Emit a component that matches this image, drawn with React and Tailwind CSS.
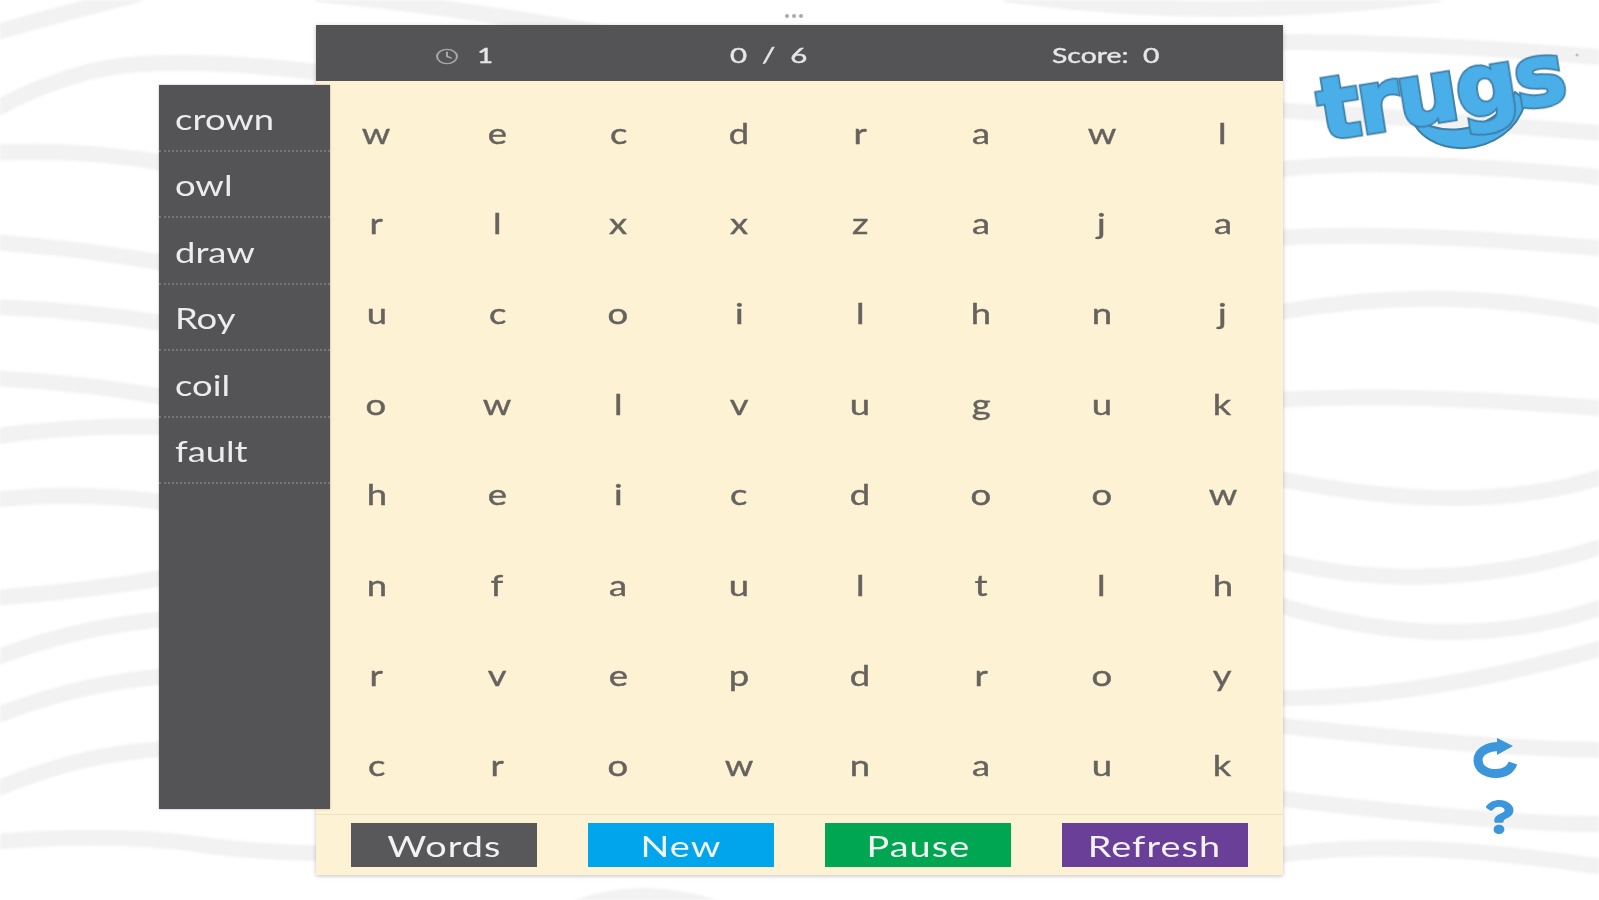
import React from 'react';
import { Clock } from 'lucide-react';
import { FaQuestion } from 'react-icons/fa';

const words = ['crown', 'owl', 'draw', 'Roy', 'coil', 'fault'];

const grid = [
  'wecdrawl',
  'rlxxzaja',
  'ucoilhnj',
  'owlvuguk',
  'heicdoow',
  'nfaultlh',
  'rvepdroy',
  'crownauk',
];

const buttons = [
  { label: 'Words', color: 'bg-[#58575a]' },
  { label: 'New', color: 'bg-[#00a5ec]' },
  { label: 'Pause', color: 'bg-[#00a651]' },
  { label: 'Refresh', color: 'bg-[#693f98]' },
];

// the wavy lines behind the game
const waves = [
  'M-10 34 Q60 14 140 -6',
  'M-10 112 Q70 68 140 64 Q230 60 330 74',
  'M-10 153 Q80 148 170 164',
  'M-10 242 Q80 248 170 264',
  'M-10 307 Q80 310 170 324',
  'M-10 378 Q80 382 170 398',
  'M-10 437 Q80 424 170 427',
  'M-10 500 Q80 490 170 503',
  'M-10 598 Q80 592 170 577',
  'M-10 660 Q80 625 170 619',
  'M-10 718 Q80 682 170 676',
  'M-10 792 Q80 752 170 749',
  'M-10 842 Q120 832 210 846 Q280 854 330 853',
  'M316 -6 Q450 6 620 36',
  'M1004 -6 Q1220 24 1440 -6',
  'M576 908 Q640 884 716 908',
  'M1275 42 Q1430 42 1610 58',
  'M1275 110 Q1420 118 1610 134',
  'M1275 170 Q1390 156 1610 178',
  'M1275 238 Q1400 230 1610 249',
  'M1275 313 Q1440 282 1610 318',
  'M1275 400 Q1410 392 1610 409',
  'M1275 478 Q1480 520 1610 474',
  'M1275 560 Q1440 600 1610 544',
  'M1275 604 Q1460 660 1610 604',
  'M1275 698 Q1420 700 1610 646',
  'M1275 725 Q1500 750 1610 750',
  'M1275 798 Q1500 825 1610 824',
  'M1275 856 Q1400 836 1610 868',
];

function Waves() {
  return (
    <svg className="absolute inset-0 blur-[1px]" width="1599" height="900" viewBox="0 0 1599 900" fill="none">
      {waves.map((d) => (
        <path key={d} d={d} stroke="#f2f2f2" strokeWidth="16" />
      ))}
    </svg>
  );
}

function Logo() {
  return (
    <div className="absolute left-[1310px] top-[40px] w-[270px] h-[115px]">
      <svg className="absolute inset-0" width="270" height="115" viewBox="0 0 270 115" fill="none">
        <path
          d="M100 72 C118 98 182 98 205 52 L216 60 C200 122 110 122 100 72 Z"
          fill="#4aaee8"
          stroke="#3d7ea8"
          strokeWidth="2"
          strokeLinejoin="round"
        />
        <circle cx="267" cy="15" r="1.5" fill="#bbbbbb" />
      </svg>
      <span className="absolute left-[7px] top-[-6px] -rotate-[9deg] font-['DejaVu_Sans',sans-serif] font-bold text-[86px] leading-[115px] tracking-[-2px] text-[#4aaee8] [-webkit-text-stroke:5px_#3d7ea8] blur-[0.6px]">
        trugs
      </span>
      <span className="absolute left-[7px] top-[-6px] -rotate-[9deg] font-['DejaVu_Sans',sans-serif] font-bold text-[86px] leading-[115px] tracking-[-2px] text-[#4aaee8] [-webkit-text-stroke:1.5px_#4aaee8] blur-[0.6px]" aria-hidden="true">
        trugs
      </span>
    </div>
  );
}

function RefreshIcon() {
  return (
    <svg className="absolute left-[1473px] top-[738px] blur-[0.5px]" width="46" height="40" viewBox="0 0 46 40" fill="none">
      <path d="M40 25 C37 33 30 35.5 23 35.5 C12 35.5 5 30 5 22 C5 14 14 8.5 26 8.5" stroke="#3b96dc" strokeWidth="9" />
      <path d="M24 0 L40 8 L24 17 Z" fill="#3b96dc" />
    </svg>
  );
}

export default function App() {
  return (
    <div className="relative h-[900px] w-full overflow-hidden bg-white font-['Lato',sans-serif]">
      <Waves />

      <div className="absolute left-[785px] top-[14px] flex gap-[3px]">
        <span className="w-[4px] h-[4px] rounded-full bg-[#aaaaaa]" />
        <span className="w-[4px] h-[4px] rounded-full bg-[#aaaaaa]" />
        <span className="w-[4px] h-[4px] rounded-full bg-[#aaaaaa]" />
      </div>

      <div className="relative mx-auto mt-[25px] w-[967px] bg-[#fef2d4] shadow-[0_1px_4px_rgba(0,0,0,0.25)]">
        {/* top bar */}
        <div className="grid grid-cols-[294px_318px_355px] items-center h-[56px] pt-[3px] bg-[#545356] text-[#e6e6e6] text-[21px] [-webkit-text-stroke:0.4px_#e6e6e6]">
          <div className="flex items-center justify-center gap-[20px] blur-[0.5px]">
            <Clock className="w-[24px] h-[17px] mt-[3px] text-[#a8a8a8]" preserveAspectRatio="none" strokeWidth={2} />
            <span className="inline-block scale-x-[1.3]">1</span>
          </div>
          <div className="text-center blur-[0.5px]">
            <span className="inline-block scale-x-[1.4] whitespace-pre">0  /  6</span>
          </div>
          <div className="text-center blur-[0.5px]">
            <span className="inline-block scale-x-[1.35]">Score:&nbsp; 0</span>
          </div>
        </div>

        {/* word list */}
        <div className="absolute left-[-157px] top-[60px] w-[171px] h-[724px] bg-[#545355] shadow-[0_0_2px_rgba(0,0,0,0.3)]">
          {words.map((w) => (
            <div key={w} className="flex items-center h-[66.5px] pl-[16px] pt-[3px] border-b-2 border-dotted border-[#767578]">
              <span className="inline-block origin-left scale-x-[1.3] text-[28px] text-[#ececec] blur-[0.5px]">{w}</span>
            </div>
          ))}
        </div>

        {/* letters */}
        <div className="pt-[6.5px] pb-[3px] border-b border-[#ece0c0]">
          {grid.map((row, r) => (
            <div key={r} className="grid grid-cols-8 h-[90.4px]">
              {row.split('').map((ch, c) => (
                <div key={c} className="flex items-center justify-center text-[28px] text-[#66635f] [-webkit-text-stroke:0.4px_#66635f]">
                  <span className="inline-block scale-x-[1.3] blur-[0.5px]">{ch}</span>
                </div>
              ))}
            </div>
          ))}
        </div>

        {/* buttons */}
        <div className="flex gap-[50.5px] px-[35px] pt-[8.3px] pb-[8px]">
          {buttons.map((b) => (
            <div key={b.label} className={`flex items-center justify-center w-[187px] h-[44px] pt-[3px] ${b.color}`}>
              <span className="inline-block scale-x-[1.35] tracking-[0.8px] text-[28px] text-[#f2f2f2] blur-[0.5px]">{b.label}</span>
            </div>
          ))}
        </div>
      </div>

      <Logo />

      <RefreshIcon />
      <FaQuestion className="absolute left-[1484px] top-[800px] w-[30px] h-[34px] text-[#3b96dc] blur-[0.5px]" preserveAspectRatio="none" />
    </div>
  );
}
